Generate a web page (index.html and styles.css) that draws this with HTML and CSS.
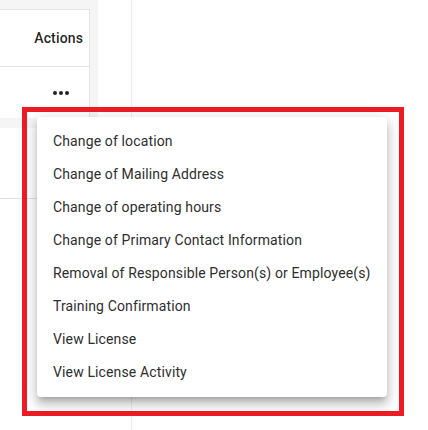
FILE: index.html
```html
<!DOCTYPE html>
<html lang="en">
<head>
<meta charset="utf-8">
<title>Actions menu</title>
<link rel="stylesheet" href="styles.css">
</head>
<body>
<div class="page">
  <div class="left">
    <div class="top-band">
      <div class="card">
        <div class="th">Actions</div>
        <div class="td">
          <svg class="dots" width="16" height="4" viewBox="0 0 16 4" aria-hidden="true">
            <circle cx="2" cy="2" r="2"/>
            <circle cx="8" cy="2" r="2"/>
            <circle cx="14" cy="2" r="2"/>
          </svg>
        </div>
      </div>
    </div>
    <div class="lower"></div>
  </div>
  <div class="right"></div>

  <div class="highlight"></div>
  <ul class="menu">
    <li class="item">Change of location</li>
    <li class="item">Change of Mailing Address</li>
    <li class="item">Change of operating hours</li>
    <li class="item">Change of Primary Contact Information</li>
    <li class="item">Removal of Responsible Person(s) or Employee(s)</li>
    <li class="item">Training Confirmation</li>
    <li class="item">View License</li>
    <li class="item">View License Activity</li>
  </ul>
</div>
</body>
</html>
```

FILE: styles.css
```css
* { box-sizing: border-box; }
html, body {
  margin: 0;
  padding: 0;
  background: #ffffff;
  font-family: Roboto, "Liberation Sans", Arial, sans-serif;
}
.page {
  position: relative;
  display: flex;
  width: 428px;
  height: 430px;
  overflow: hidden;
}
.left {
  width: 132px;
  flex: none;
  border-right: 1px solid #ececec;
  display: flex;
  flex-direction: column;
}
.top-band {
  width: 98px;
  height: 128px;
  background: #f5f5f5;
  padding-top: 9px;
}
.card {
  width: 90px;
  background: #ffffff;
  border-top: 1px solid #e3e3e3;
  border-right: 1px solid #e3e3e3;
}
.th {
  height: 57px;
  border-bottom: 1px solid #e3e3e3;
  display: flex;
  align-items: center;
  justify-content: flex-end;
  padding-right: 6px;
  font-size: 14px;
  font-weight: 500;
  letter-spacing: 0.01em;
  color: rgba(0, 0, 0, 0.87);
}
.td {
  height: 51px;
  display: flex;
  align-items: center;
  justify-content: flex-end;
  padding-right: 20px;
  padding-top: 1px;
}
.dots { fill: #222222; display: block; }
.lower {
  height: 71px;
  border-bottom: 1px solid #e0e0e0;
}
.right { flex: 1; background: #ffffff; }

.highlight {
  position: absolute;
  left: 22px;
  top: 107px;
  width: 382px;
  height: 309px;
  border: 5px solid #ed1c24;
}
.menu {
  position: absolute;
  left: 37px;
  top: 117px;
  width: 350px;
  height: 280px;
  margin: 0;
  padding: 8px 0;
  list-style: none;
  background: #ffffff;
  border-radius: 4px;
  box-shadow: 0 5px 5px -3px rgba(0,0,0,0.2), 0 8px 10px 1px rgba(0,0,0,0.14), 0 3px 14px 2px rgba(0,0,0,0.12);
}
.item {
  height: 33px;
  line-height: 33px;
  padding: 0 16px;
  font-size: 14px;
  letter-spacing: 0.00938em;
  color: #2e2e2e;
  white-space: nowrap;
}
```
